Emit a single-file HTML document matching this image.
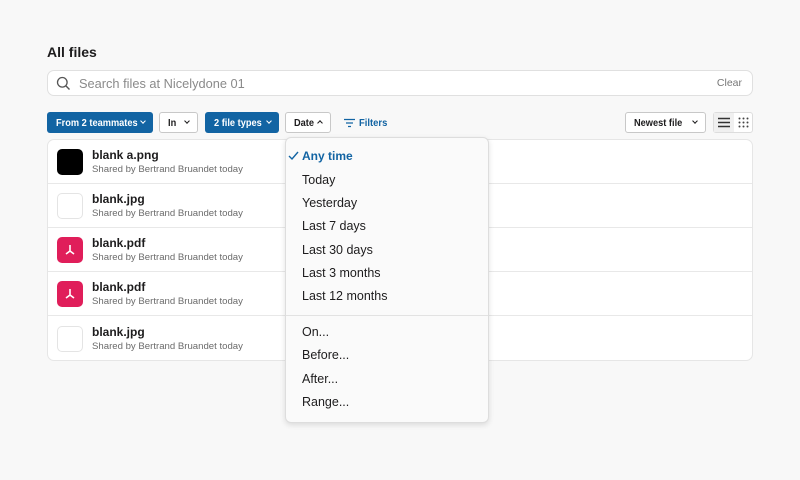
<!DOCTYPE html>
<html><head><meta charset="utf-8"><style>
*{box-sizing:border-box;margin:0;padding:0}
body{width:800px;height:480px;background:#f8f8f8;font-family:"Liberation Sans",sans-serif;color:#1d1c1d;position:relative;overflow:hidden}
.abs{position:absolute}
h1{position:absolute;left:47px;top:44px;font-size:14px;font-weight:bold}
.search{left:47px;top:70px;width:706px;height:26px;background:#fff;border:1px solid #e0e0e0;border-radius:7px}
.search span{position:absolute;left:31px;top:5px;font-size:12.8px;color:#8a8a8a}
.search .clear{left:auto;right:10px;top:6px;font-size:10.5px;color:#777}
.btn{position:absolute;top:112px;height:21px;border-radius:3px;font-size:10.5px;line-height:23px;padding-left:9px;font-weight:bold}
.btn b{display:inline-block;transform:scaleX(0.88);transform-origin:left center}
.blue{background:#1264a3;color:#fff}
.wh{background:#fff;border:1px solid #c8c8c8;color:#1d1c1d;line-height:21px;padding-left:8px}
.chev{position:absolute;right:8px;top:7px;width:4px;height:4px;border-right:1.2px solid currentColor;border-bottom:1.2px solid currentColor;transform:rotate(45deg)}
.up{transform:rotate(-135deg);top:9px}
.list{left:47px;top:139px;width:706px;height:222px;background:#fff;border:1px solid #e6e6e6;border-radius:7px}
.row{position:absolute;left:0;width:704px;height:44px;border-bottom:1px solid #e8e8e8}
.ic{position:absolute;left:9px;top:9px;width:26px;height:26px;border-radius:5px}
.t{position:absolute;left:44px;top:8px;font-size:12px;font-weight:bold}
.s{position:absolute;left:44px;top:24px;font-size:9.6px;color:#6b6b6b}
.menu{left:285px;top:137px;width:204px;height:286px;background:#fafafa;border:1px solid #ddd;border-radius:6px;box-shadow:0 2px 6px rgba(0,0,0,.12)}
.mi{position:absolute;left:16px;font-size:12.5px;color:#1d1c1d}
</style></head><body>
<h1>All files</h1>
<div class="abs search">
<svg class="abs" style="left:8px;top:5px" width="15" height="15" viewBox="0 0 15 15"><circle cx="6.3" cy="6.3" r="4.8" fill="none" stroke="#555" stroke-width="1.3"/><line x1="9.8" y1="9.8" x2="13.5" y2="13.5" stroke="#555" stroke-width="1.4"/></svg>
<span>Search files at Nicelydone 01</span><span class="clear">Clear</span></div>

<div class="btn blue" style="left:47px;width:106px"><b>From 2 teammates</b><i class="chev"></i></div>
<div class="btn wh" style="left:159px;width:39px"><b>In</b><i class="chev" style="top:6px"></i></div>
<div class="btn blue" style="left:205px;width:74px"><b>2 file types</b><i class="chev"></i></div>
<div class="btn wh" style="left:285px;width:46px"><b>Date</b><i class="chev up" style="top:8px"></i></div>
<svg class="abs" style="left:344px;top:118px" width="11" height="10"><path d="M0 1.5H11M2 5H9M4 8.5H7" stroke="#1264a3" stroke-width="1.3"/></svg>
<div class="abs" style="left:359px;top:117px;font-size:10.5px;font-weight:bold;color:#1264a3;transform:scaleX(0.9);transform-origin:left">Filters</div>
<div class="btn wh" style="left:625px;width:81px"><b>Newest file</b><i class="chev" style="top:6px"></i></div>
<div class="abs" style="left:713px;top:112px;width:40px;height:21px;border:1px solid #ddd;border-radius:3px;background:#fff">
<div class="abs" style="left:0;top:0;width:20px;height:19px;background:#f0f0f0"></div>
<svg class="abs" style="left:4px;top:4px" width="12" height="11"><path d="M0 1.5H12M0 5.5H12M0 9.5H12" stroke="#333" stroke-width="1.4"/></svg>
<svg class="abs" style="left:24px;top:4px" width="11" height="11" fill="#444"><circle cx="1.5" cy="1.5" r="1"/><circle cx="5.5" cy="1.5" r="1"/><circle cx="9.5" cy="1.5" r="1"/><circle cx="1.5" cy="5.5" r="1"/><circle cx="5.5" cy="5.5" r="1"/><circle cx="9.5" cy="5.5" r="1"/><circle cx="1.5" cy="9.5" r="1"/><circle cx="5.5" cy="9.5" r="1"/><circle cx="9.5" cy="9.5" r="1"/></svg>
</div>

<div class="abs list">
<div class="row" style="top:0"><div class="ic" style="background:#000"></div><div class="t">blank a.png</div><div class="s">Shared by Bertrand Bruandet today</div></div>
<div class="row" style="top:44px"><div class="ic" style="border:1px solid #e4e4e4"></div><div class="t">blank.jpg</div><div class="s">Shared by Bertrand Bruandet today</div></div>
<div class="row" style="top:88px"><div class="ic" style="background:#e01e5a"><svg width="26" height="26"><path d="M13 8v7M9 17l4-3 4 3" stroke="#fff" stroke-width="1.6" fill="none"/></svg></div><div class="t">blank.pdf</div><div class="s">Shared by Bertrand Bruandet today</div></div>
<div class="row" style="top:132px"><div class="ic" style="background:#e01e5a"><svg width="26" height="26"><path d="M13 8v7M9 17l4-3 4 3" stroke="#fff" stroke-width="1.6" fill="none"/></svg></div><div class="t">blank.pdf</div><div class="s">Shared by Bertrand Bruandet today</div></div>
<div class="row" style="top:177px;border:none"><div class="ic" style="border:1px solid #e4e4e4"></div><div class="t">blank.jpg</div><div class="s">Shared by Bertrand Bruandet today</div></div>
</div>

<div class="abs menu">
<svg class="abs" style="left:2px;top:13px" width="11" height="10"><path d="M1 5l3 3 6-7" stroke="#1264a3" stroke-width="1.4" fill="none"/></svg>
<div class="mi" style="top:11px;color:#1264a3;font-weight:bold;font-size:12px">Any time</div>
<div class="mi" style="top:35px">Today</div>
<div class="mi" style="top:58px">Yesterday</div>
<div class="mi" style="top:81px">Last 7 days</div>
<div class="mi" style="top:105px">Last 30 days</div>
<div class="mi" style="top:128px">Last 3 months</div>
<div class="mi" style="top:151px">Last 12 months</div>
<div class="abs" style="left:0;top:177px;width:202px;height:1px;background:#e2e2e2"></div>
<div class="mi" style="top:187px">On...</div>
<div class="mi" style="top:210px">Before...</div>
<div class="mi" style="top:234px">After...</div>
<div class="mi" style="top:257px">Range...</div>
</div>
</body></html>
